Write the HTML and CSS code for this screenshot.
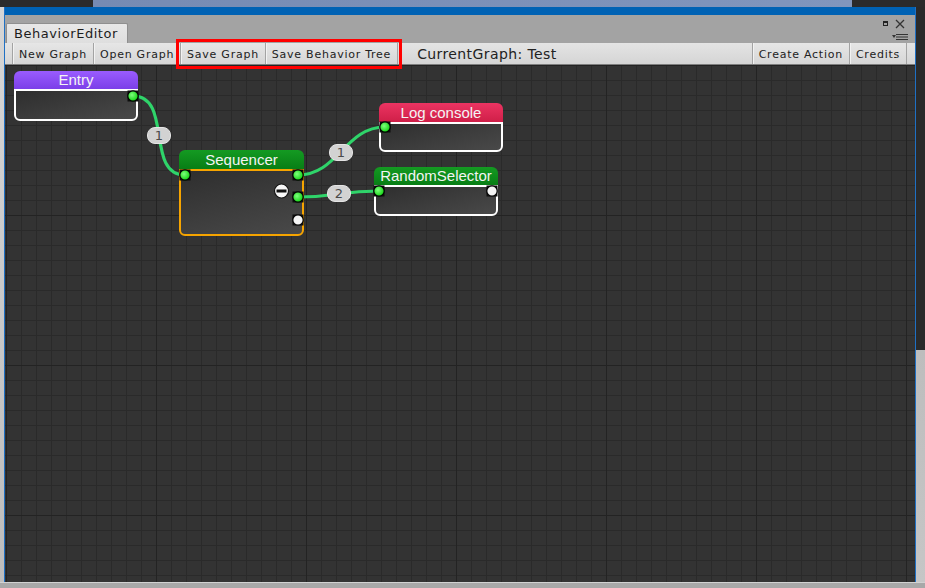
FILE: index.html
```html
<!DOCTYPE html>
<html>
<head>
<meta charset="utf-8">
<link rel="stylesheet" href="styles.css">
</head>
<body>
<div class="screen">
  <div class="topstrip">
    <div class="ts-dark-l"></div>
    <div class="ts-blue"></div>
    <div class="ts-dark-r"></div>
  </div>
  <div class="mid">
    <div class="side-l"></div>
    <div class="window">
      <div class="titlebar"></div>
      <div class="tabbar">
        <div class="tab">BehaviorEditor</div>
        <svg class="tab-icons" width="26" height="24" viewBox="0 0 26 24">
          <rect x="1.5" y="2.5" width="4" height="4" fill="none" stroke="#222" stroke-width="1"/>
          <rect x="1" y="2" width="5" height="2" fill="#222"/>
          <path d="M14 1 L22 9 M22 1 L14 9" stroke="#333" stroke-width="1.3" fill="none"/>
          <polygon points="10,16 14,16 12,19" fill="#333"/>
          <path d="M14 15.5 H26 M14 18 H26 M14 20.5 H26" stroke="#333" stroke-width="1.2"/>
        </svg>
      </div>
      <div class="toolbar">
        <div class="btn">New Graph</div>
        <div class="btn">Open Graph</div>
        <div class="btn">Save Graph</div>
        <div class="btn btn-last">Save Behavior Tree</div>
        <div class="current">CurrentGraph: Test</div>
        <div class="right-group">
          <div class="btn">Create Action</div>
          <div class="btn btn-last">Credits</div>
        </div>
      </div>
      <div class="canvas">
        <svg class="edges" width="910" height="517" viewBox="0 0 910 517">
          <path d="M128 31 C168 31 140 110 180 110" />
          <path d="M293 110 C333 110 340 62 380 62" />
          <path d="M293 132 C333 132 334 126 374 126" />
        </svg>

        <div class="node node-entry">
          <div class="node-head">Entry</div>
          <div class="node-body"></div>
        </div>
        <div class="node node-seq">
          <div class="node-head">Sequencer</div>
          <div class="node-body"></div>
        </div>
        <div class="node node-log">
          <div class="node-head">Log console</div>
          <div class="node-body"></div>
        </div>
        <div class="node node-rs">
          <div class="node-head">RandomSelector</div>
          <div class="node-body"></div>
        </div>

        <div class="elabel l1">1</div>
        <div class="elabel l2">1</div>
        <div class="elabel l3">2</div>

        <svg class="ports" width="910" height="517" viewBox="0 0 910 517">
          <defs>
            <radialGradient id="g" cx="0.4" cy="0.4" r="0.6">
              <stop offset="0" stop-color="#7dff7d"/>
              <stop offset="1" stop-color="#14d414"/>
            </radialGradient>
          </defs>
          <g class="port">
            <rect x="122.5" y="25.5" width="11" height="11" fill="#0d0d0d"/>
            <circle cx="128" cy="31" r="5.2" fill="url(#g)" stroke="#000" stroke-width="1.2"/>
          </g>
          <g class="port">
            <rect x="174.5" y="104.5" width="11" height="11" fill="#0d0d0d"/>
            <circle cx="180" cy="110" r="5.2" fill="url(#g)" stroke="#000" stroke-width="1.2"/>
          </g>
          <g class="port">
            <rect x="287.5" y="104.5" width="11" height="11" fill="#0d0d0d"/>
            <circle cx="293" cy="110" r="5.2" fill="url(#g)" stroke="#000" stroke-width="1.2"/>
          </g>
          <g class="port">
            <rect x="287.5" y="126.5" width="11" height="11" fill="#0d0d0d"/>
            <circle cx="293" cy="132" r="5.2" fill="url(#g)" stroke="#000" stroke-width="1.2"/>
          </g>
          <g class="port">
            <rect x="287.5" y="149.5" width="11" height="11" fill="#0d0d0d"/>
            <circle cx="293" cy="155" r="5.2" fill="#f4f4f4" stroke="#000" stroke-width="1.2"/>
          </g>
          <g class="port">
            <rect x="374.5" y="56.5" width="11" height="11" fill="#0d0d0d"/>
            <circle cx="380" cy="62" r="5.2" fill="url(#g)" stroke="#000" stroke-width="1.2"/>
          </g>
          <g class="port">
            <rect x="368.5" y="120.5" width="11" height="11" fill="#0d0d0d"/>
            <circle cx="374" cy="126" r="5.2" fill="url(#g)" stroke="#000" stroke-width="1.2"/>
          </g>
          <g class="port">
            <rect x="481.5" y="120.5" width="11" height="11" fill="#0d0d0d"/>
            <circle cx="487" cy="126" r="5.2" fill="#f4f4f4" stroke="#000" stroke-width="1.2"/>
          </g>
          <circle cx="276.5" cy="126" r="7" fill="#f8f8f8" stroke="#151515" stroke-width="1.2"/>
          <rect x="271.5" y="124.5" width="10" height="3" fill="#111"/>
        </svg>
      </div>
    </div>
    <div class="side-r"></div>
  </div>
  <div class="bottom"></div>
  <div class="highlight"></div>
</div>
</body>
</html>
```

FILE: styles.css
```css
html, body {
  margin: 0;
  padding: 0;
}
body {
  width: 925px;
  height: 588px;
  overflow: hidden;
  background: #a6a6a6;
  font-family: "DejaVu Sans", sans-serif;
}
.screen {
  position: relative;
  width: 925px;
  height: 588px;
  display: flex;
  flex-direction: column;
}
.topstrip {
  height: 7px;
  display: flex;
}
.ts-dark-l {
  width: 93px;
  background: #2b2b2b;
}
.ts-blue {
  flex: 1;
  background: linear-gradient(to right, #768bb3, #8196bd);
}
.ts-dark-r {
  width: 73px;
  background: #2b2b2b;
}
.mid {
  height: 575px;
  display: flex;
}
.side-l {
  width: 4px;
  background: linear-gradient(#d6d6d6, #bdbdbd);
}
.side-r {
  width: 9px;
  background: linear-gradient(#2a2a2a 0, #2a2a2a 343px, #bdbdbd 343px, #c6c6c6 100%);
}
.window {
  width: 910px;
  border-left: 1px solid #1f70c4;
  border-right: 1px solid #1f70c4;
  display: flex;
  flex-direction: column;
}
.titlebar {
  height: 8px;
  background: #0062b4;
}
.tabbar {
  height: 28px;
  background: #a3a3a3;
  display: flex;
  align-items: flex-end;
}
.tab {
  margin-left: 1px;
  height: 19px;
  line-height: 20px;
  padding: 0 9px 0 7px;
  background: linear-gradient(#e8e8e8, #dedede);
  border: 1px solid #8f8f8f;
  border-bottom: none;
  border-radius: 2px 2px 0 0;
  font-size: 13px;
  letter-spacing: 0.55px;
  color: #1c1c1c;
}
.tab-icons {
  margin-left: auto;
  margin-right: 7px;
  align-self: flex-start;
  margin-top: 4px;
}
.toolbar {
  height: 21px;
  border-bottom: 1px solid #7e7e7e;
  background: linear-gradient(#e4e4e4, #d5d5d5);
  display: flex;
  padding-left: 7px;
  padding-right: 8px;
  font-size: 11px;
  letter-spacing: 0.75px;
  color: #222;
}
.btn {
  height: 19px;
  padding: 2px 6px 0 6px;
  line-height: 19px;
  border-left: 1px solid #a3a3a3;
  box-shadow: inset 1px 0 #f2f2f2;
  background: linear-gradient(#e6e6e6, #d6d6d6);
  white-space: nowrap;
}
.btn-last {
  border-right: 1px solid #a3a3a3;
}
.current {
  margin-left: 19px;
  padding-top: 2px;
  line-height: 19px;
  font-size: 14px;
  letter-spacing: 0.4px;
  color: #222;
  white-space: nowrap;
}
.right-group {
  margin-left: auto;
  display: flex;
}
.canvas {
  position: relative;
  height: 517px;
  background-color: #333333;
  background-image:
    linear-gradient(to right, #232323 1px, transparent 1px),
    linear-gradient(to bottom, #232323 1px, transparent 1px),
    linear-gradient(to right, #2a2a2a 1px, transparent 1px),
    linear-gradient(to bottom, #2a2a2a 1px, transparent 1px);
  background-size: 150px 150px, 150px 150px, 15px 15px, 15px 15px;
  background-position: 1px 0, 1px 0, 1px 0, 1px 0;
  overflow: hidden;
}
.edges {
  position: absolute;
  left: 0;
  top: 0;
  z-index: 1;
}
.edges path {
  fill: none;
  stroke: #2fd46a;
  stroke-width: 3.2;
}
.ports {
  position: absolute;
  left: 0;
  top: 0;
  z-index: 4;
}
.node {
  position: absolute;
  width: 124px;
  z-index: 2;
}
.node-head {
  height: 18px;
  line-height: 18px;
  border-radius: 6px 6px 0 0;
  color: #f4f4f4;
  font-family: "Liberation Sans", Arial, sans-serif;
  font-size: 15px;
  text-align: center;
  white-space: nowrap;
}
.node-body {
  border: 2px solid #ffffff;
  border-radius: 0 0 6px 6px;
  background: linear-gradient(165deg, #2e2e2e, #494949);
}
.node-entry {
  left: 9px;
  top: 6px;
}
.node-entry .node-head {
  background: linear-gradient(#9a5cff, #7b3fe8);
}
.node-entry .node-body {
  height: 28px;
}
.node-seq {
  left: 174px;
  top: 85px;
  width: 125px;
}
.node-seq .node-head {
  height: 19px;
  line-height: 19px;
  background: linear-gradient(#149a22, #087e15);
}
.node-seq .node-body {
  height: 63px;
  border-color: #f6a400;
}
.node-log {
  left: 374px;
  top: 38px;
}
.node-log .node-head {
  height: 19px;
  line-height: 19px;
  background: linear-gradient(#ec3462, #cf1f48);
}
.node-log .node-body {
  height: 26px;
}
.node-rs {
  left: 369px;
  top: 102px;
}
.node-rs .node-head {
  background: linear-gradient(#149a22, #087e15);
}
.node-rs .node-body {
  height: 27px;
}
.elabel {
  position: absolute;
  z-index: 3;
  width: 22px;
  height: 15px;
  line-height: 15px;
  border-radius: 8px;
  background: #d2d2d2;
  border: 1px solid #e4e4e4;
  color: #4a4a4a;
  font-size: 13px;
  text-align: center;
}
.l1 {
  left: 142px;
  top: 62px;
}
.l2 {
  left: 324px;
  top: 79px;
}
.l3 {
  left: 322px;
  top: 120px;
}
.bottom {
  height: 6px;
  border-top: 1px solid #d2d2d2;
  background: #a8a8a8;
  box-sizing: border-box;
}
.highlight {
  position: absolute;
  left: 176px;
  top: 39px;
  width: 226px;
  height: 30px;
  border: 3px solid #ff0000;
  box-sizing: border-box;
}
```
